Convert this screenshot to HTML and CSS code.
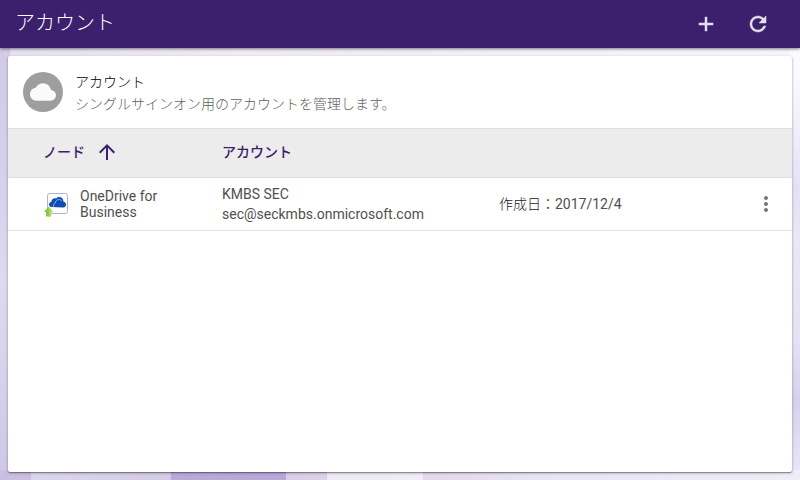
FILE: index.html
```html
<!DOCTYPE html>
<html lang="ja">
<head>
    <meta charset="UTF-8">
    <title>アカウント</title>
    <link rel="stylesheet" href="styles.css">
</head>
<body>
<header class="toolbar">
    <h1 class="toolbar-title">アカウント</h1>
    <button type="button" class="icon-button bold-icon" aria-label="追加">
        <svg width="24" height="24" viewBox="0 0 24 24"><path d="M19 13h-6v6h-2v-6H5v-2h6V5h2v6h6v2z"/></svg>
    </button>
    <button type="button" class="icon-button bold-icon" aria-label="更新">
        <svg width="24" height="24" viewBox="0 0 24 24"><path d="M17.65 6.35C16.2 4.9 14.21 4 12 4c-4.42 0-7.99 3.58-7.99 8s3.57 8 7.99 8c3.73 0 6.84-2.55 7.73-6h-2.08c-.82 2.33-3.04 4-5.65 4-3.31 0-6-2.69-6-6s2.69-6 6-6c1.66 0 3.14.69 4.22 1.78L13 11h7V4l-2.35 2.35z"/></svg>
    </button>
</header>

<main class="card">
    <div class="card-header">
        <div class="avatar">
            <svg width="26" height="26" viewBox="0 0 24 24"><path d="M19.35 10.04C18.67 6.59 15.64 4 12 4 9.11 4 6.6 5.64 5.35 8.04 2.34 8.36 0 10.91 0 14c0 3.31 2.69 6 6 6h13c2.76 0 5-2.24 5-5 0-2.64-2.05-4.78-4.65-4.96z"/></svg>
        </div>
        <div class="card-text">
            <h2 class="card-title">アカウント</h2>
            <p class="card-subtitle">シングルサインオン用のアカウントを管理します。</p>
        </div>
    </div>

    <table class="accounts">
        <thead>
        <tr>
            <th class="col-node">
                <button type="button" class="sort-button">ノード
                    <svg width="24" height="24" viewBox="0 0 24 24"><path d="M4 12l1.41 1.41L11 7.83V20h2V7.83l5.58 5.59L20 12l-8-8-8 8z"/></svg>
                </button>
            </th>
            <th class="col-account">アカウント</th>
            <th class="col-date"></th>
            <th class="col-menu"></th>
        </tr>
        </thead>
        <tbody>
        <tr>
            <td class="col-node">
                <div class="node">
                    <svg class="node-icon" width="26" height="26" viewBox="0 0 26 26">
                        <rect x="4.500" y="2.500" width="20" height="20" rx="2" fill="#fff" stroke="#a3b6d4"/>
                        <path d="M8.500 16c-1.500-.2-2.500-1.200-2.500-2.600 0-1.400 1-2.400 2.300-2.500.1-2.100 1.700-3.700 3.600-3.700.5 0 .9.100 1.300.3.700-1 1.800-1.500 3-1.500 2.200 0 3.900 1.600 4.200 3.700l.1 1c1.500.3 2.500 1.400 2.500 2.900 0 1.600-1.100 2.900-2.800 2.900z" fill="#0f4db5"/>
                        <path d="M10.800 16.200c-1.100-1.400-.4-3.600 1.500-3.900.1-2.300 1.600-3.800 3.600-3.800 1.400 0 2.500.7 3.200 1.800" fill="none" stroke="#d6e2f5" stroke-width=".6"/>
                        <path d="M5.500 15.500l4.500 5.500H8v4.500H3V21H1z" fill="#8ac640"/>
                        <path d="M5.500 15.500l4.500 5.500H8v4.500H6z" fill="#a9d957"/>
                    </svg>
                    <span class="node-name">OneDrive for Business</span>
                </div>
            </td>
            <td class="col-account">KMBS SEC<br>sec@seckmbs.onmicrosoft.com</td>
            <td class="col-date">作成日：<time datetime="2017-12-04">2017/12/4</time></td>
            <td class="col-menu">
                <button type="button" class="icon-button menu-button" aria-label="メニュー">
                    <svg width="24" height="24" viewBox="0 0 24 24"><path d="M12 8c1.100 0 2-.9 2-2s-.9-2-2-2-2 .9-2 2 .9 2 2 2zm0 2c-1.100 0-2 .9-2 2s.9 2 2 2 2-.9 2-2-.9-2-2-2zm0 6c-1.100 0-2 .9-2 2s.9 2 2 2 2-.9 2-2-.9-2-2-2z"/></svg>
                </button>
            </td>
        </tr>
        </tbody>
    </table>
</main>
</body>
</html>
```

FILE: styles.css
```css
* {
    box-sizing: border-box;
}
body {
    display: flex;
    flex-direction: column;
    min-height: 100vh;
    margin: 0;
    font-family: Roboto, "Noto Sans CJK JP", sans-serif;
    font-size: 14px;
    line-height: 20px;
    color: #505050;
    /* faceted backdrop: bottom edge, left edge, right edge, top edge */
    background:
        linear-gradient(90deg, #c8bfe2 31px, #dcd6ec 31px, #d3cbe7 171px, #b8abd8 171px, #b6aadb 286px, #d9cfe7 286px, #dcd3e9 327px, #efebf6 327px, #f0edf7 423px, #e2d9ec 423px, #e8e4f3 540px, #ece8f6 664px, #f0edf8) bottom / 100% 10px no-repeat,
        linear-gradient(#d8d2ec, #d2cbe8 60px, #d8d2ed 200px, #dfdaf0 280px, #cfc7e6) left / 10px 100% no-repeat,
        linear-gradient(#fafaff 80px, #e4e1f5 190px, #eae7f7 240px, #e6e2f5 340px, #d6d0ee 400px, #ece8f6) right / 10px 100% no-repeat,
        linear-gradient(90deg, #e6e0f0, #f0ebf6 30%, #f8f6fc);
}
h1, h2, p {
    margin: 0;
    font-weight: normal;
}
button {
    border: none;
    padding: 0;
    background: none;
    font: inherit;
    color: inherit;
    cursor: pointer;
}
svg {
    display: block;
    fill: currentColor;
}

.toolbar {
    display: flex;
    align-items: center;
    gap: 12px;
    height: 48px;
    padding: 0 22px 2px 15px;
    background: #3c206e;
    color: #e4dfec;
    box-shadow: 0 1px 3px rgba(0, 0, 0, 0.5);
}
.toolbar-title {
    flex: 1;
    font-size: 20px;
    font-weight: 300;
    line-height: 28px;
    color: #fff;
}
.icon-button {
    display: flex;
    align-items: center;
    justify-content: center;
    width: 40px;
    height: 40px;
}
.bold-icon {
    padding-top: 2px;
}
.bold-icon svg {
    stroke: currentColor;
    stroke-width: 0.5;
}

.card {
    flex: 1;
    margin: 8px;
    border-radius: 2px;
    background: #fff;
    box-shadow: 0 1px 3px rgba(0, 0, 0, 0.3), 0 1px 1px rgba(0, 0, 0, 0.3);
}
.card-header {
    display: flex;
    align-items: center;
    gap: 12px;
    height: 72px;
    padding: 0 15px;
}
.avatar {
    display: flex;
    align-items: center;
    justify-content: center;
    width: 40px;
    height: 40px;
    border-radius: 50%;
    background: #9e9e9e;
    color: #fafafa;
}
.card-text {
    padding-top: 2px;
    line-height: 22px;
}
.card-title {
    font-size: 14px;
    font-weight: 300;
    color: #000;
}
.card-subtitle {
    font-weight: 300;
    color: #616161;
}

.accounts {
    width: 100%;
    border-collapse: separate;
    border-spacing: 0;
    table-layout: fixed;
}
.accounts th {
    height: 50px;
    padding: 0 0 2px;
    border-top: 1px solid #e0e0e0;
    border-bottom: 1px solid #e0e0e0;
    background: #ececec;
    color: #3c206e;
    font-weight: 500;
    text-align: left;
}
.accounts td {
    height: 53px;
    padding: 0;
    border-bottom: 1px solid #e0e0e0;
}
.accounts .col-node {
    width: 214px;
    padding-left: 35px;
}
.accounts .col-account {
    width: 277px;
}
.accounts .col-date {
    font-weight: 300;
    color: #212121;
}
.accounts .col-date time {
    font-weight: 400;
    color: #505050;
}
.accounts .col-menu {
    width: 52px;
}
.sort-button {
    display: flex;
    align-items: center;
    gap: 10px;
}
.node {
    display: flex;
    align-items: center;
    gap: 11px;
}
.node-name {
    width: 100px;
    line-height: 16px;
}
.menu-button {
    margin: 0 auto;
    color: #757575;
}
```
